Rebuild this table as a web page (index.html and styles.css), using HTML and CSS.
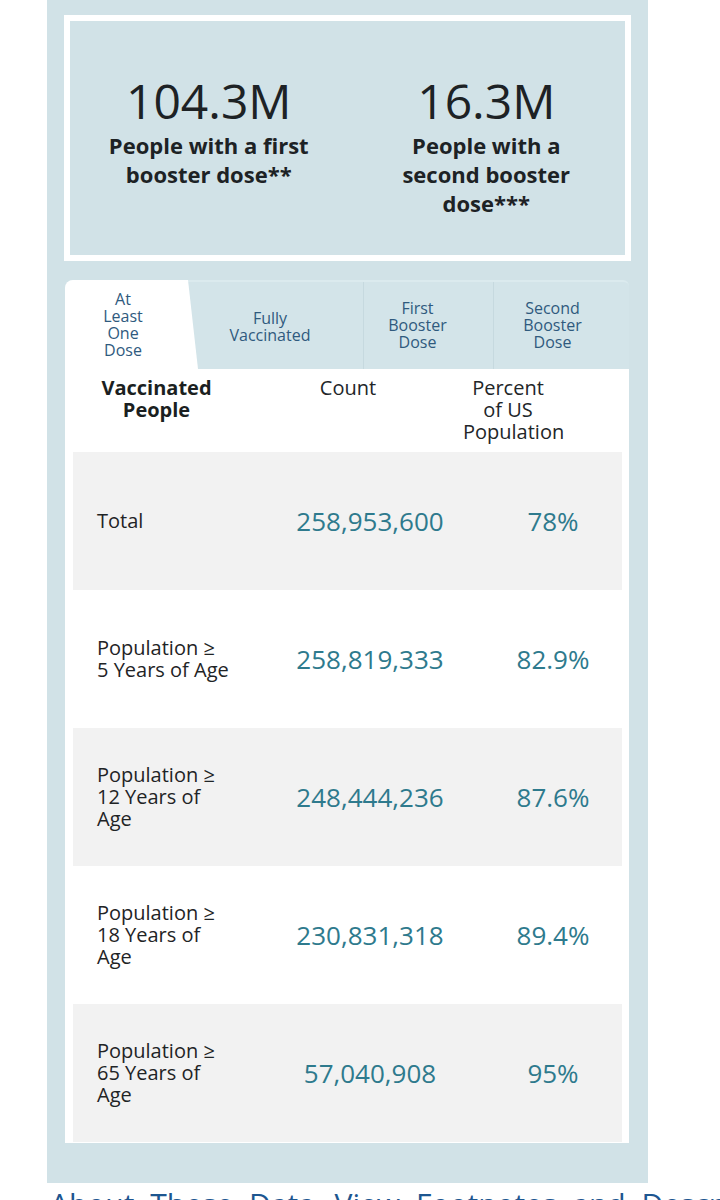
FILE: index.html
```html
<!DOCTYPE html>
<html lang="en">
<head>
<meta charset="utf-8">
<title>COVID-19 Vaccinations</title>
<link rel="stylesheet" href="styles.css">
</head>
<body>
<div class="panel">
  <div class="summary">
    <div class="stat">
      <div class="stat-num">104.3M</div>
      <div class="stat-label">People with a first booster dose**</div>
    </div>
    <div class="stat">
      <div class="stat-num">16.3M</div>
      <div class="stat-label">People with a second booster dose***</div>
    </div>
  </div>

  <div class="vax">
    <div class="tabs">
      <div class="tab tab-active tab-1"><span class="tab-text w-1">At Least One Dose</span></div>
      <div class="tab tab-2"><span class="tab-text w-2">Fully Vaccinated</span></div>
      <div class="tab tab-3"><span class="tab-text w-3">First Booster Dose</span></div>
      <div class="tab tab-4"><span class="tab-text w-3">Second Booster Dose</span></div>
    </div>

    <div class="table">
      <div class="thead">
        <div class="th th-label">Vaccinated People</div>
        <div class="th th-count">Count</div>
        <div class="th th-pct"><span class="pct-box">Percent of US Population</span></div>
      </div>

      <div class="row alt">
        <div class="cell-label">Total</div>
        <div class="cell-num">258,953,600</div>
        <div class="cell-pct">78%</div>
      </div>
      <div class="row">
        <div class="cell-label">Population ≥<br>5 Years of Age</div>
        <div class="cell-num">258,819,333</div>
        <div class="cell-pct">82.9%</div>
      </div>
      <div class="row alt">
        <div class="cell-label">Population ≥<br>12 Years of<br>Age</div>
        <div class="cell-num">248,444,236</div>
        <div class="cell-pct">87.6%</div>
      </div>
      <div class="row">
        <div class="cell-label">Population ≥<br>18 Years of<br>Age</div>
        <div class="cell-num">230,831,318</div>
        <div class="cell-pct">89.4%</div>
      </div>
      <div class="row alt">
        <div class="cell-label">Population ≥<br>65 Years of<br>Age</div>
        <div class="cell-num">57,040,908</div>
        <div class="cell-pct">95%</div>
      </div>
    </div>
  </div>
</div>
<div class="links">
  <a class="link" href="#">About These Data</a>
  <a class="link" href="#">View Footnotes and Descriptions</a>
</div>
</body>
</html>
```

FILE: styles.css
```css
* {
  box-sizing: border-box;
}

html, body {
  margin: 0;
  padding: 0;
  background: #ffffff;
}

body {
  font-family: "Open Sans", "Noto Sans", "Liberation Sans", sans-serif;
  color: #1f2426;
  width: 720px;
  height: 1200px;
  overflow: hidden;
}

.panel {
  margin-left: 47px;
  width: 601px;
  background: #d1e2e7;
  padding: 15px 17px 40px 17px;
}

/* summary card */
.summary {
  height: 246px;
  border: 6px solid #ffffff;
  background: #d1e2e7;
  display: grid;
  grid-template-columns: 1fr 1fr;
  padding-top: 52px;
}

.stat {
  text-align: center;
  padding: 0 33px;
}

.stat-num {
  font-size: 48px;
  line-height: 56px;
  font-weight: 400;
  color: #1d2225;
}

.stat-label {
  margin-top: 2px;
  font-size: 22px;
  line-height: 29px;
  font-weight: 700;
  color: #1d2225;
}

/* tabs + table */
.vax {
  margin: 19px 2px 0 1px;
}

.tabs {
  display: flex;
  height: 89px;
  background: #d3e4e9;
  border-top: 2px solid #dbeaee;
  border-top-left-radius: 8px;
  border-top-right-radius: 6px;
}

.tab {
  display: flex;
  align-items: center;
  justify-content: center;
  color: #2f5a7e;
  font-size: 16px;
  line-height: 17px;
}

.tab-text {
  text-align: center;
  display: block;
}

.w-1 { width: 50px; }
.w-2 { width: 100px; }
.w-3 { width: 70px; }

.tab-active {
  background: #ffffff;
  margin-top: -2px;
  border-top-left-radius: 8px;
  clip-path: polygon(0 0, 123px 0, 100% 100%, 0 100%);
}

.tab-1 {
  width: 133px;
  padding-right: 17px;
}

.tab-2 {
  width: 165px;
  padding-right: 21px;
  padding-top: 2px;
}

.tab-3 {
  width: 130px;
  padding-right: 22px;
  border-left: 1px solid #c6d9df;
}

.tab-4 {
  width: 136px;
  padding-right: 18px;
  border-left: 1px solid #c6d9df;
}

.table {
  background: #ffffff;
  padding: 0 7px 1px 8px;
}

.thead {
  height: 83px;
  padding-top: 8px;
  display: grid;
  grid-template-columns: 167px 216px 97px;
  font-size: 20px;
  line-height: 22px;
  color: #222629;
}

.th {
  text-align: center;
}

.th-label {
  font-weight: 700;
  color: #1b1f21;
}

.th-pct {
  padding-left: 7px;
  text-align: left;
}

.pct-box {
  display: block;
  width: 90px;
  text-align: center;
}

.row {
  height: 138px;
  display: grid;
  grid-template-columns: 207px 180px 162px;
  align-items: center;
}

.row.alt {
  background: #f2f2f2;
}

.cell-label {
  padding-left: 24px;
  font-size: 20px;
  line-height: 22px;
  color: #1f2426;
}

.cell-num {
  text-align: center;
  font-size: 26px;
  color: #2e7a8d;
}

.cell-pct {
  text-align: center;
  padding-left: 24px;
  font-size: 26px;
  color: #2e7a8d;
}

/* bottom links */
.links {
  margin: 1px 0 0 50px;
  width: 670px;
  overflow: hidden;
  font-size: 30px;
  line-height: 40px;
  word-spacing: 8px;
  white-space: nowrap;
}

.link {
  color: #1d5690;
  text-decoration: none;
  margin-right: 4px;
}
```
